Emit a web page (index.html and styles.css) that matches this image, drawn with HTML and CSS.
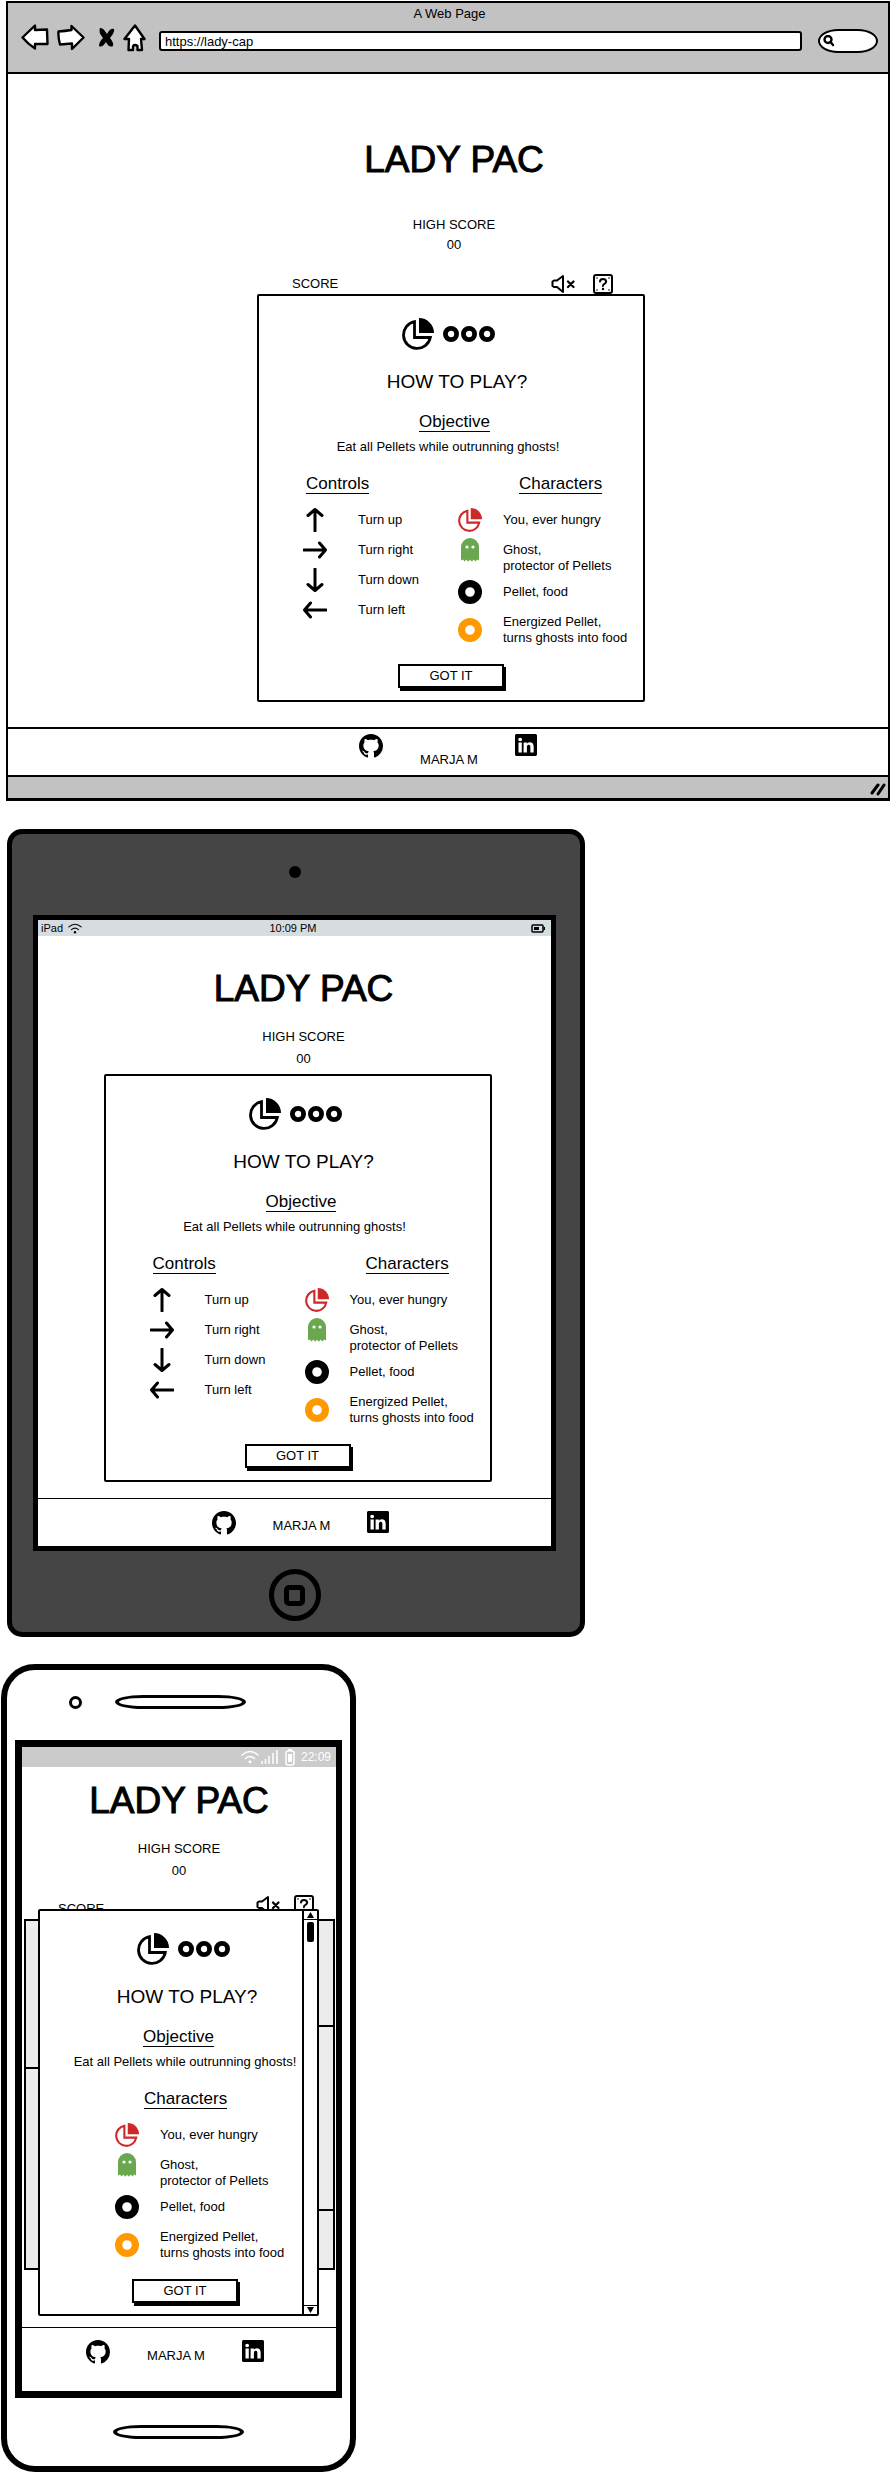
FILE: index.html
```html
<!DOCTYPE html>
<html lang="en">
<head>
<meta charset="utf-8">
<title>Lady Pac wireframes</title>
<link rel="stylesheet" href="styles.css">
</head>
<body>
<svg class="sprite" aria-hidden="true">
  <symbol id="pie" viewBox="0 0 32 32">
    <path d="M17 0A15 15 0 0 1 32 15H17Z" fill="currentColor"/>
    <path d="M28.3 19.5A13.5 13.5 0 1 1 12.5 3.7V19.5Z" fill="none" stroke="currentColor" stroke-width="2.8"/>
  </symbol>
  <symbol id="pellet" viewBox="0 0 24 24">
    <circle cx="12" cy="12" r="8.4" fill="none" stroke="currentColor" stroke-width="7.2"/>
  </symbol>
  <symbol id="ghost" viewBox="0 0 24 24">
    <path d="M3 9a9 9 0 0 1 18 0v13.500l-2-1-1.500 2-2-2-1.500 2.300-2-2-2 2-1.500-2.300-2 2-1.500-2-2 1Z" fill="currentColor"/>
    <circle cx="9" cy="9" r="1.600" fill="#fff"/><circle cx="15" cy="9" r="1.600" fill="#fff"/>
  </symbol>
  <symbol id="arrow" viewBox="0 0 24 24">
    <path d="M12 23V2M5 7.500L12 1.500L19 7.500" fill="none" stroke="currentColor" stroke-width="3" stroke-linecap="round" stroke-linejoin="round"/>
  </symbol>
  <symbol id="mute" viewBox="0 0 24 20">
    <path d="M12 2V18L6 13H3L1.500 12V7.500L3 6.500H6Z" fill="none" stroke="currentColor" stroke-width="2" stroke-linejoin="round"/>
    <path d="M17 7.500L22.500 13M22.500 7.500L17 13" stroke="currentColor" stroke-width="2.200" stroke-linecap="round"/>
  </symbol>
  <symbol id="help" viewBox="0 0 20 20">
    <rect x="1" y="1" width="18" height="18" rx="2" fill="none" stroke="currentColor" stroke-width="2"/>
    <path d="M7 7.500Q7.200 5 10 5T13.200 7.500Q13.200 9 11.500 9.800T10 12" fill="none" stroke="currentColor" stroke-width="2" stroke-linecap="round"/>
    <circle cx="10" cy="15" r="1.200"/><circle cx="4" cy="4" r=".8"/><circle cx="16" cy="4" r=".8"/><circle cx="4" cy="16" r=".8"/><circle cx="16" cy="16" r=".8"/>
  </symbol>
  <symbol id="github" viewBox="0 0 16 16">
    <path d="M8 0C3.58 0 0 3.58 0 8c0 3.54 2.29 6.53 5.47 7.59.4.07.55-.17.55-.38 0-.19-.01-.82-.01-1.49-2.01.37-2.53-.49-2.69-.94-.09-.23-.48-.94-.82-1.13-.28-.15-.68-.52-.01-.53.63-.01 1.08.58 1.23.82.72 1.21 1.87.87 2.33.66.07-.52.28-.87.51-1.07-1.78-.2-3.64-.89-3.64-3.95 0-.87.31-1.59.82-2.15-.08-.2-.36-1.02.08-2.12 0 0 .67-.21 2.200.82.64-.18 1.320-.27 2-.27s1.360.09 2 .27c1.530-1.040 2.200-.82 2.200-.82.44 1.100.16 1.920.08 2.120.51.56.82 1.270.82 2.150 0 3.070-1.870 3.750-3.650 3.950.29.25.54.73.54 1.480 0 1.070-.01 1.930-.01 2.200 0 .21.15.46.55.38A8.01 8.01 0 0 0 16 8c0-4.420-3.580-8-8-8z"/>
  </symbol>
  <symbol id="linkedin" viewBox="0 0 16 16">
    <path d="M0 1.146C0 .513.526 0 1.175 0h13.650C15.474 0 16 .513 16 1.146v13.708c0 .633-.526 1.146-1.175 1.146H1.175C.526 16 0 15.487 0 14.854V1.146zm4.943 12.248V6.169H2.542v7.225h2.401zm-1.200-8.212c.837 0 1.358-.554 1.358-1.248-.015-.709-.52-1.248-1.342-1.248-.822 0-1.359.54-1.359 1.248 0 .694.521 1.248 1.327 1.248h.016zm4.908 8.212V9.359c0-.216.016-.432.08-.586.173-.431.568-.878 1.232-.878.869 0 1.216.662 1.216 1.634v3.865h2.401V9.250c0-2.220-1.184-3.252-2.764-3.252-1.274 0-1.845.7-2.165 1.193v-1.022h-2.400c.03.678 0 7.225 0 7.225h2.400z"/>
  </symbol>
  <symbol id="wifi" viewBox="0 0 18 14">
    <path d="M1 5Q9-2 17 5M4.500 8.500Q9 4.500 13.500 8.500" fill="none" stroke="currentColor" stroke-width="1.400" stroke-linecap="round"/>
    <circle cx="9" cy="11.800" r="1.500" fill="currentColor"/>
  </symbol>
</svg>

<main class="board">

  <section class="browser">
    <header class="toolbar">
      <p class="window-title">A Web Page</p>
      <div class="toolbar-row">
        <nav class="nav">
          <button class="plain" aria-label="Back"><svg width="28" height="27" viewBox="0 0 28 27"><path d="M1.500 13.500L14 1.500V6L26 5.500L26.500 20L14 20V24.500Q7 20 1.500 13.500Z" class="sketch"/></svg></button>
          <button class="plain" aria-label="Forward"><svg width="28" height="27" viewBox="0 0 28 27"><path d="M1.500 7.500Q8 7 14.500 6V2L26.500 13.500L15 25V19.500L3 20.500Q1 13 1.500 7.500Z" class="sketch"/></svg></button>
          <button class="plain" aria-label="Stop"><svg width="22" height="24" viewBox="0 0 22 24"><path d="M7 2Q10 1 14 8Q17 2 21 3Q22 6 17 12Q21 17 20 20Q16 22 13 16Q9 22 6 20Q6 16 10 12Q5 6 7 2Z"/></svg></button>
          <button class="plain" aria-label="Home"><svg width="23" height="28" viewBox="0 0 23 28"><path d="M1.500 15L12 1.500L21.500 15H18L19 26H14.500V22Q12 20 10 22V26H5.500L6 15Z" class="sketch"/></svg></button>
        </nav>
        <input class="address" type="text" aria-label="Address" value="https://lady-cap">
        <label class="search">
          <svg width="12" height="12" viewBox="0 0 12 12"><circle cx="5" cy="4.500" r="3.500" class="sketch"/><path d="M7.500 7L10 10" class="sketch"/></svg>
          <input type="search" aria-label="Search">
        </label>
      </div>
    </header>

    <div class="page">
      <div class="intro">
        <h1>LADY PAC</h1>
        <p class="label">HIGH SCORE</p>
        <p class="label">00</p>
      </div>
      <div class="stage">
        <div class="game-bar">
          <span class="score">SCORE</span>
          <button class="plain" aria-label="Sound off"><svg width="24" height="20"><use href="#mute"/></svg></button>
          <button class="plain" aria-label="Help"><svg width="20" height="20"><use href="#help"/></svg></button>
        </div>
        <article class="modal">
          <div class="logo"><svg width="32" height="32"><use href="#pie"/></svg><span class="dots"><svg width="16" height="16"><use href="#pellet"/></svg><svg width="16" height="16"><use href="#pellet"/></svg><svg width="16" height="16"><use href="#pellet"/></svg></span></div>
          <h2>HOW TO PLAY?</h2>
          <h3 class="objective">Objective</h3>
          <p class="goal">Eat all Pellets while outrunning ghosts!</p>
          <div class="columns">
            <section class="controls">
              <h3>Controls</h3>
              <ul>
                <li><svg class="up"><use href="#arrow"/></svg>Turn up</li>
                <li><svg class="right"><use href="#arrow"/></svg>Turn right</li>
                <li><svg class="down"><use href="#arrow"/></svg>Turn down</li>
                <li><svg class="left"><use href="#arrow"/></svg>Turn left</li>
              </ul>
            </section>
            <section class="characters">
              <h3>Characters</h3>
              <ul>
                <li><svg class="red"><use href="#pie"/></svg>You, ever hungry</li>
                <li class="ghost"><svg class="green"><use href="#ghost"/></svg><span>Ghost,<br>protector of Pellets</span></li>
                <li><svg><use href="#pellet"/></svg>Pellet, food</li>
                <li class="energized"><svg class="orange"><use href="#pellet"/></svg><span>Energized Pellet,<br>turns ghosts into food</span></li>
              </ul>
            </section>
          </div>
          <button class="got-it">GOT IT</button>
        </article>
      </div>
    </div>
    <footer class="credits">
      <a href="#" aria-label="GitHub"><svg width="24" height="24"><use href="#github"/></svg></a>
      <span>MARJA M</span>
      <a href="#" aria-label="LinkedIn"><svg width="22" height="22"><use href="#linkedin"/></svg></a>
    </footer>
    <div class="status-strip"><svg width="16" height="14" viewBox="0 0 16 14"><path d="M2 11L8 3M8 12L14 3" fill="none" stroke="#000" stroke-width="3" stroke-linecap="round"/></svg></div>
  </section>

  <section class="tablet">
    <span class="camera"></span>
    <div class="screen">
      <div class="status">
        <span class="carrier">iPad <svg width="14" height="11"><use href="#wifi"/></svg></span>
        <span>10:09 PM</span>
        <svg class="battery" width="14" height="9" viewBox="0 0 14 9"><rect x="1" y="1" width="11" height="7" rx="1" fill="none" stroke="#000" stroke-width="1.500"/><path d="M3 3H8V6H3ZM12.500 3H14V6H12.500Z"/></svg>
      </div>
      <div class="page">
        <div class="intro">
          <h1>LADY PAC</h1>
          <p class="label">HIGH SCORE</p>
          <p class="label">00</p>
        </div>
        <div class="stage">
          <article class="modal">
            <div class="logo"><svg width="32" height="32"><use href="#pie"/></svg><span class="dots"><svg width="16" height="16"><use href="#pellet"/></svg><svg width="16" height="16"><use href="#pellet"/></svg><svg width="16" height="16"><use href="#pellet"/></svg></span></div>
            <h2>HOW TO PLAY?</h2>
            <h3 class="objective">Objective</h3>
            <p class="goal">Eat all Pellets while outrunning ghosts!</p>
            <div class="columns">
              <section class="controls">
                <h3>Controls</h3>
                <ul>
                  <li><svg class="up"><use href="#arrow"/></svg>Turn up</li>
                  <li><svg class="right"><use href="#arrow"/></svg>Turn right</li>
                  <li><svg class="down"><use href="#arrow"/></svg>Turn down</li>
                  <li><svg class="left"><use href="#arrow"/></svg>Turn left</li>
                </ul>
              </section>
              <section class="characters">
                <h3>Characters</h3>
                <ul>
                  <li><svg class="red"><use href="#pie"/></svg>You, ever hungry</li>
                  <li class="ghost"><svg class="green"><use href="#ghost"/></svg><span>Ghost,<br>protector of Pellets</span></li>
                  <li><svg><use href="#pellet"/></svg>Pellet, food</li>
                  <li class="energized"><svg class="orange"><use href="#pellet"/></svg><span>Energized Pellet,<br>turns ghosts into food</span></li>
                </ul>
              </section>
            </div>
            <button class="got-it">GOT IT</button>
          </article>
        </div>
      </div>
      <footer class="credits">
        <a href="#" aria-label="GitHub"><svg width="24" height="24"><use href="#github"/></svg></a>
        <span>MARJA M</span>
        <a href="#" aria-label="LinkedIn"><svg width="22" height="22"><use href="#linkedin"/></svg></a>
      </footer>
    </div>
    <button class="home-button" aria-label="Home"><span></span></button>
  </section>

  <section class="phone">
    <div class="earpiece"><span class="sensor"></span><span class="slot"></span></div>
    <div class="screen">
      <div class="status">
        <svg width="18" height="14"><use href="#wifi"/></svg>
        <svg width="17" height="14" viewBox="0 0 17 14"><path d="M1 14V11M4.500 14V9M8 14V6M12 14V3M16 14V0" stroke="#fff" stroke-width="1.500"/></svg>
        <svg class="cell" width="10" height="17" viewBox="0 0 10 17"><rect x="1" y="2" width="8" height="14" rx="2" fill="none" stroke="#fff" stroke-width="1.500"/><path d="M3 5H7V13H3ZM3 0H7V2H3Z" fill="#fff"/></svg>
        <span>22:09</span>
      </div>
      <div class="page">
        <div class="intro">
          <h1>LADY PAC</h1>
          <p class="label">HIGH SCORE</p>
          <p class="label">00</p>
        </div>
        <div class="stage">
          <div class="game-bar">
            <span class="score">SCORE</span>
            <button class="plain" aria-label="Sound off"><svg width="24" height="20"><use href="#mute"/></svg></button>
            <button class="plain" aria-label="Help"><svg width="20" height="20"><use href="#help"/></svg></button>
          </div>
          <div class="board-behind"><span class="tick tick-left"></span><span class="tick tick-top"></span><span class="tick tick-low"></span></div>
          <article class="modal">
            <div class="modal-body">
              <div class="logo"><svg width="32" height="32"><use href="#pie"/></svg><span class="dots"><svg width="16" height="16"><use href="#pellet"/></svg><svg width="16" height="16"><use href="#pellet"/></svg><svg width="16" height="16"><use href="#pellet"/></svg></span></div>
              <h2>HOW TO PLAY?</h2>
              <h3 class="objective">Objective</h3>
              <p class="goal">Eat all Pellets while outrunning ghosts!</p>
              <section class="characters">
                <h3>Characters</h3>
                <ul>
                  <li><svg class="red"><use href="#pie"/></svg>You, ever hungry</li>
                  <li class="ghost"><svg class="green"><use href="#ghost"/></svg><span>Ghost,<br>protector of Pellets</span></li>
                  <li><svg><use href="#pellet"/></svg>Pellet, food</li>
                  <li class="energized"><svg class="orange"><use href="#pellet"/></svg><span>Energized Pellet,<br>turns ghosts into food</span></li>
                </ul>
              </section>
              <button class="got-it">GOT IT</button>
            </div>
            <div class="scrollbar">
              <svg width="13" height="9" viewBox="0 0 13 9"><path d="M2.500 8L6.500 1L10.500 8Z"/></svg>
              <span class="thumb"></span>
              <svg width="13" height="9" viewBox="0 0 13 9"><path d="M2.500 1H10.500L6.500 8Z"/></svg>
            </div>
          </article>
        </div>
      </div>
      <footer class="credits">
        <a href="#" aria-label="GitHub"><svg width="24" height="24"><use href="#github"/></svg></a>
        <span>MARJA M</span>
        <a href="#" aria-label="LinkedIn"><svg width="22" height="22"><use href="#linkedin"/></svg></a>
      </footer>
    </div>
    <span class="slot"></span>
  </section>

</main>
</body>
</html>
```

FILE: styles.css
```css
* { box-sizing: border-box; margin: 0; padding: 0; }

body {
  background: #fff;
  color: #000;
  font: 13px/16px "Liberation Sans", Arial, sans-serif;
}

svg { display: block; flex: none; }
ul { list-style: none; }
button, input { font: inherit; color: inherit; }
a { color: inherit; }
.sprite { position: absolute; width: 0; height: 0; }
.plain { border: 0; background: none; }
.sketch { fill: #fff; stroke: #000; stroke-width: 2.400; stroke-linejoin: round; stroke-linecap: round; }

.board { display: flex; flex-direction: column; align-items: flex-start; padding-top: 1px; }

/* Browser window */
.browser {
  align-self: stretch;
  margin: 0 1px 28px 6px;
  border: 2px solid #000;
  border-width: 2px 2px 3px;
}
.toolbar { background: #c2c2c2; border-bottom: 2px solid #000; padding: 3px 10px 12px 13px; }
.window-title { text-align: center; }
.toolbar-row { display: flex; align-items: center; height: 38px; }
.nav { display: flex; align-items: center; gap: 8px; margin: 0 13px 7px 0; }
.address {
  flex: 1;
  min-width: 0;
  height: 20px;
  margin-right: 16px;
  padding: 0 4px;
  border: 2px solid #000;
  border-radius: 3px;
  background: #fff;
}
.search {
  display: flex;
  align-items: center;
  width: 60px;
  height: 24px;
  padding: 0 3px;
  border: 2px solid #000;
  border-radius: 20px / 12px;
  background: #fff;
}
.search input { width: 100%; min-width: 0; border: 0; background: none; appearance: none; outline: 0; }
.status-strip {
  display: flex;
  justify-content: flex-end;
  padding: 5px 2px 2px;
  background: #c2c2c2;
  border-top: 2px solid #000;
}

/* Game page */
.intro { text-align: center; }
h1 { font-size: 37px; line-height: 44px; font-weight: 400; -webkit-text-stroke: 1px #000; }
.label { line-height: 20px; }
.browser .page { padding: 64px 0 25px 6px; }
.browser .intro { padding: 0 0 19px 6px; }
.browser h1 { margin-bottom: 33px; }

.stage { position: relative; width: 388px; max-width: 100%; margin: 0 auto; }
.game-bar { display: flex; align-items: center; padding: 0 32px 0 35px; }
.score { flex: 1; }
.game-bar .plain + .plain { margin-left: 18px; }

.modal { background: #fff; border: 2px solid #000; border-radius: 2px; padding: 22px 0 12px; }
.logo { display: flex; align-items: center; justify-content: center; gap: 9px; padding-right: 5px; }
.dots { display: flex; gap: 2px; }
h2 { margin-top: 20px; padding-left: 12px; font-size: 19px; line-height: 24px; font-weight: 400; text-align: center; }
h3 {
  width: fit-content;
  font-size: 17px;
  line-height: 18px;
  font-weight: 400;
  border-bottom: 1px solid #000;
}
.objective { margin: 19px auto 7px 160px; }
.goal { text-align: center; padding-right: 6px; }
.columns { display: flex; margin-top: 20px; padding-left: 44px; }
.controls { flex: 0 0 155px; }
.controls h3 { margin-left: 3px; }
.characters { flex: 1; }
.characters h3 { margin-left: 61px; }
.modal ul { display: flex; flex-direction: column; gap: 6px; margin-top: 14px; }
.modal li { display: flex; align-items: center; gap: 21px; white-space: nowrap; }
.modal li svg { width: 24px; height: 24px; }
.controls li { gap: 31px; }
.ghost span { padding-top: 4px; }
.modal .ghost { align-items: flex-start; }
.energized { margin-top: 4px; }
.right { transform: rotate(90deg); }
.down { transform: rotate(180deg); }
.left { transform: rotate(270deg); }
.red { color: #cc2929; }
.green { color: #6aa84f; }
.orange { color: #ff9900; }
.got-it {
  display: block;
  width: 106px;
  height: 24px;
  margin: 18px auto 0;
  border: 2px solid #000;
  background: #fff;
  box-shadow: 2px 3px 0 #000;
}

.credits { display: flex; justify-content: center; gap: 37px; border-top: 2px solid #000; }
.browser .credits { padding: 5px 0 7px; }
.browser .credits span { padding-top: 18px; }

/* Tablet */
.tablet {
  display: flex;
  flex-direction: column;
  align-items: center;
  width: 578px;
  max-width: 100%;
  margin: 0 0 27px 7px;
  padding: 32px 24px 11px 21px;
  border: 5px solid #000;
  border-radius: 15px;
  background: #454545;
}
.camera { width: 12px; height: 12px; margin: 0 0 37px; border-radius: 50%; background: #000; }
.screen { width: 100%; background: #fff; border: 5px solid #000; }
.tablet .status {
  display: grid;
  grid-template-columns: 1fr auto 1fr;
  align-items: center;
  padding: 0 6px 0 3px;
  background: #d6dde0;
  font-size: 11px;
}
.carrier { display: flex; align-items: center; gap: 5px; }
.battery { justify-self: end; }
.tablet .page { padding: 31px 0 16px 6px; }
.tablet .intro { padding: 0 0 5px 12px; }
.tablet h1 { margin-bottom: 16px; }
.label + .label { margin-top: 2px; }
.browser .label + .label { margin-top: 0; }
.tablet .credits { padding: 12px 0 11px 12px; border-top-width: 1px; }
.tablet .credits span { padding-top: 7px; }
.home-button {
  display: grid;
  place-items: center;
  width: 52px;
  height: 52px;
  margin-top: 18px;
  border: 5px solid #000;
  border-radius: 50%;
  background: none;
}
.home-button span { width: 21px; height: 21px; border: 5px solid #000; border-radius: 5px; }

/* Phone */
.phone {
  display: flex;
  flex-direction: column;
  align-items: center;
  width: 355px;
  max-width: 100%;
  margin-left: 1px;
  padding: 25px 8px 27px;
  border: 6px solid #000;
  border-radius: 34px;
  background: #fff;
}
.earpiece { display: flex; align-items: center; align-self: flex-start; gap: 33px; margin: 0 0 31px 54px; }
.sensor { width: 13px; height: 13px; border: 3px solid #000; border-radius: 50%; }
.slot { width: 131px; height: 14px; border: 4px solid #000; border-width: 3px 4px; border-radius: 28px / 7px; }
.phone .screen { margin-bottom: 27px; border-width: 7px 6px 7px 7px; }
.phone .status {
  display: flex;
  align-items: center;
  justify-content: flex-end;
  gap: 2px;
  height: 20px;
  padding-right: 5px;
  background: #cbcbcb;
  color: #fff;
  font-size: 12px;
}
.cell { margin: 0 4px 0 5px; }
.phone .page { padding: 12px 0 11px; }
.phone .intro { padding-bottom: 14px; }
.phone h1 { margin-bottom: 16px; }
.phone .stage { width: 100%; }
.phone .game-bar { align-items: flex-end; padding: 0 22px 0 36px; }
.phone .score { margin-bottom: -2px; }
.phone .game-bar .plain + .plain { margin-left: 14px; }
.board-behind {
  position: absolute;
  inset: 24px 1px 46px 2px;
  background: #ececec;
  border: 2px solid #000;
}
.tick { position: absolute; width: 18px; height: 2px; background: #000; }
.tick-left { left: 0; top: 42%; }
.tick-top { right: 0; top: 30%; }
.tick-low { right: 0; top: 83%; }
.phone .modal { position: relative; display: flex; margin: -6px 17px 0 16px; padding: 0; }
.modal-body { flex: 1; min-width: 0; padding: 22px 0 11px 28px; }
.phone .logo { padding-right: 3px; }
.phone h2 { padding-left: 4px; }
.phone .objective { margin-left: 75px; }
.phone .goal { padding: 0; white-space: nowrap; }
.phone .characters { margin-top: 20px; padding-left: 47px; }
.phone .characters h3 { margin-left: 29px; }
.scrollbar { display: flex; flex-direction: column; border-left: 2px solid #000; }
.scrollbar svg:first-child { border-bottom: 1px solid #000; }
.scrollbar svg:last-child { margin-top: auto; border-top: 1px solid #000; }
.thumb { width: 7px; height: 20px; margin: 2px auto; border-radius: 2px; background: #000; }
.phone .credits { padding: 12px 8px 27px 0; border-top-width: 1px; }
.phone .credits span { padding-top: 8px; }
```
